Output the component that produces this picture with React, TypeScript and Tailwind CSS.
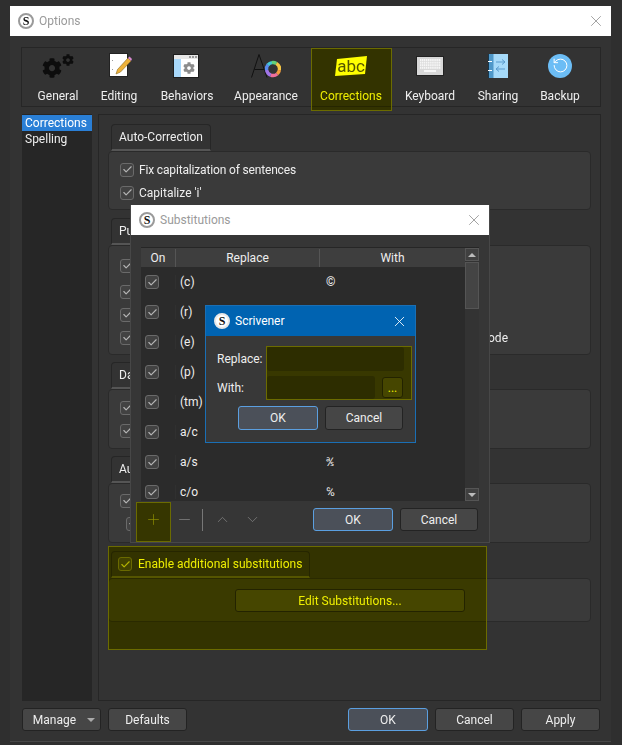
import { ReactNode } from "react";
import { Check, ChevronDown, ChevronUp, Minus, Plus, RotateCcw, X } from "lucide-react";
import { FaCog } from "react-icons/fa";

const toolbar = [
  { label: "General", width: "w-[72px]", icon: <GearsIcon /> },
  { label: "Editing", width: "w-[50px]", icon: <EditingIcon /> },
  { label: "Behaviors", width: "w-[86px]", icon: <BehaviorsIcon /> },
  { label: "Appearance", width: "w-[72px]", icon: <AppearanceIcon /> },
  { label: "Corrections", width: "w-[98px]", icon: <AbcIcon /> },
  { label: "Keyboard", width: "w-[60px]", icon: <KeyboardIcon /> },
  { label: "Sharing", width: "w-[76px]", icon: <SharingIcon /> },
  { label: "Backup", width: "w-[48px]", icon: <BackupIcon /> },
];

// the With values of the middle rows sit behind the Scrivener dialog
const substitutions = [
  ["(c)", "©"],
  ["(r)", ""],
  ["(e)", ""],
  ["(p)", ""],
  ["(tm)", ""],
  ["a/c", ""],
  ["a/s", "℁"],
  ["c/o", "℅"],
];

function GearsIcon() {
  return (
    <div className="flex items-start text-[#0d0d0d]">
      <FaCog size={20} className="mt-[4px]" />
      <FaCog size={12} />
    </div>
  );
}

function EditingIcon() {
  return (
    <svg width="26" height="25" viewBox="0 0 26 25">
      <rect x="3.5" y="0.5" width="18" height="23" fill="#fff" stroke="#222" />
      <rect x="6" y="7" width="1" height="1" fill="#999" />
      <rect x="6" y="16" width="1" height="1" fill="#999" />
      <path d="M10 21 L11.5 16.5 L22 5 L25 8 L14.5 19 Z" fill="#eeb23a" stroke="#8a6a20" strokeWidth="0.6" />
      <path d="M22 5 L23.5 3.5 L26 6 L25 8 Z" fill="#d88ad0" />
    </svg>
  );
}

function BehaviorsIcon() {
  return (
    <div className="relative ml-[-3px] h-[24px] w-[26px] border border-[#1d1d1d] bg-white">
      <div className="flex h-[4px] justify-end gap-[1px] bg-[#e6e6e6] pr-[1px] pt-[1px]">
        <span className="h-[2px] w-[2px] bg-[#999]" />
        <span className="h-[2px] w-[2px] bg-[#999]" />
        <span className="h-[2px] w-[2px] bg-[#999]" />
      </div>
      <div className="flex h-[18px]">
        <div className="w-[7px] bg-[#a8d8fa]" />
        <div className="flex flex-1 items-center justify-center text-[#8c8c8c]">
          <FaCog size={12} />
        </div>
      </div>
    </div>
  );
}

function arc(start: number, end: number) {
  const r = 6.5;
  const cx = 22;
  const cy = 15;
  const a = (start * Math.PI) / 180;
  const b = (end * Math.PI) / 180;
  return `M${cx + r * Math.cos(a)} ${cy + r * Math.sin(a)} A${r} ${r} 0 0 1 ${cx + r * Math.cos(b)} ${cy + r * Math.sin(b)}`;
}

function AppearanceIcon() {
  const segments = [
    ["#f6c644", -60, 10],
    ["#f39a3c", 10, 50],
    ["#ef6f9a", 50, 110],
    ["#a074e6", 110, 170],
    ["#5a8cf0", 170, 220],
    ["#42c8d8", 220, 260],
    ["#62d07a", 260, 300],
  ] as const;
  return (
    <svg width="30" height="24" viewBox="0 0 30 24" fill="none">
      <path d="M0.5 23.5 L8 0.5 L16 23.5 M3.5 15.5 L13 15.5" stroke="#111" strokeWidth="1" />
      {segments.map(([color, start, end]) => (
        <path key={color} d={arc(start, end + 1)} stroke={color} strokeWidth="3.4" />
      ))}
    </svg>
  );
}

function AbcIcon() {
  return (
    <svg width="32" height="20" viewBox="0 0 32 20">
      <polygon points="2,3 32,0 30,18 0,20" fill="#fff" />
      <text x="16" y="15.5" textAnchor="middle" fontSize="17" fontFamily="'Roboto', sans-serif" fill="#555">
        abc
      </text>
    </svg>
  );
}

function KeyboardIcon() {
  const keys = [];
  for (let row = 0; row < 4; row++) {
    for (let col = 0; col < 11; col++) {
      keys.push(<rect key={`${row}-${col}`} x={4 + col * 1.9} y={3 + row * 2.6} width="1.4" height="2" fill="#f6f6f6" />);
    }
  }
  return (
    <svg width="28" height="20" viewBox="0 0 28 20">
      <rect x="0.5" y="0.5" width="27" height="19" fill="#d8d8d8" stroke="#222" />
      {keys}
      <rect x="8" y="14" width="12" height="2" fill="#f6f6f6" />
    </svg>
  );
}

function SharingIcon() {
  return (
    <svg width="20" height="24" viewBox="0 0 20 24" fill="none">
      <rect x="0" y="0" width="20" height="24" fill="#a6daf9" />
      <rect x="0" y="0" width="5.5" height="24" fill="#4f98c9" />
      <rect x="0" y="0" width="1" height="24" fill="#17374d" />
      <rect x="0" y="7" width="4" height="1" fill="#fff" />
      <rect x="0" y="16" width="4" height="1" fill="#fff" />
      <path d="M8 8 H17 M14 5.5 L17 8 L14 10.5 M17 15 H8 M11 12.5 L8 15 L11 17.5" stroke="#5a9bcd" />
    </svg>
  );
}

function BackupIcon() {
  return (
    <div className="flex h-[24px] w-[24px] items-center justify-center rounded-full bg-[#6cbdf5]">
      <RotateCcw size={17} strokeWidth={1.4} className="text-white" />
    </div>
  );
}

function Logo({ ring = "border-[#9a9a9a]" }: { ring?: string }) {
  return (
    <div className={`flex h-[16px] w-[16px] items-center justify-center rounded-full border-2 bg-white font-['Liberation_Serif',serif] text-[12px] font-bold leading-none text-[#111] ${ring}`}>
      S
    </div>
  );
}

function Box({ className = "" }: { className?: string }) {
  return (
    <span className={`flex h-[14px] w-[14px] shrink-0 items-center justify-center rounded-[3px] border border-[#6a6a6a] bg-[#424242] ${className}`}>
      <Check size={11} strokeWidth={2.5} className="text-[#b4b4b4]" />
    </span>
  );
}

function Btn({ children, primary = false, className = "" }: { children: ReactNode; primary?: boolean; className?: string }) {
  const look = primary ? "border-[#5b9fe0] bg-[#4b5059]" : "border-[#232323] bg-[#464646]";
  return (
    <div className={`flex items-center justify-center rounded-[3px] border text-[12px] text-[#eee] ${look} ${className}`}>
      {children}
    </div>
  );
}

function Option({ label, className = "" }: { label: ReactNode; className?: string }) {
  return (
    <div className={`flex h-[23px] items-center gap-[5px] ${className}`}>
      <Box />
      {label}
    </div>
  );
}

function Group({ tab, className = "", boxClass, children }: { tab: ReactNode; className?: string; boxClass: string; children?: ReactNode }) {
  return (
    <div className={className}>
      <div className="ml-[3px] flex h-[27px] w-fit items-center gap-[6px] rounded-t-[4px] border border-b-[2px] border-[#262626] border-b-[#555] bg-[#333] px-[7px]">
        {tab}
      </div>
      <div className={`rounded-[4px] border border-[#2a2a2a] bg-[#3a3a3a] ${boxClass}`}>{children}</div>
    </div>
  );
}

function Highlight({ className }: { className: string }) {
  return (
    <div className={`absolute border border-[#6b6b00] ${className}`}>
      <div className="h-full w-full bg-[#ffff00] mix-blend-multiply" />
    </div>
  );
}

function TitleBar({ title }: { title: string }) {
  return (
    <div className="flex h-[30px] items-center justify-between bg-white pl-[8px] pr-[6px] text-[12px] text-[#9a9a9a]">
      <div className="flex items-center gap-[5px]">
        <Logo />
        {title}
      </div>
      <X size={18} strokeWidth={0.9} className="text-[#777]" />
    </div>
  );
}

function SubstitutionsDialog() {
  return (
    <div className="absolute left-[130px] top-[205px] h-[338px] w-[360px] border border-t-0 border-[#474747] bg-[#363636]">
      <TitleBar title="Substitutions" />
      <div className="mx-[10px] mt-[12px] flex h-[254px] border-t border-[#262626]">
        <div className="w-[324px] overflow-hidden bg-[#2b2b2b]">
          <div className="flex h-[19px] items-center bg-[#3e3e3e] text-[12px] text-[#eee]">
            <div className="w-[35px] border-r border-[#555] text-center">On</div>
            <div className="w-[144px] border-r border-[#555] text-center">Replace</div>
            <div className="flex-1 text-center">With</div>
          </div>
          {substitutions.map(([from, to]) => (
            <div key={from} className="flex h-[30px] items-center text-[12px] text-[#eee]">
              <div className="flex w-[35px] justify-start border-r border-[#303030] pl-[4px]">
                <Box />
              </div>
              <div className="w-[144px] pl-[4px]">{from}</div>
              <div className="pl-[6px]">{to}</div>
            </div>
          ))}
        </div>
        <div className="flex w-[14px] flex-col gap-[1px] bg-[#333]">
          <div className="flex h-[13px] items-center justify-center border border-[#555] bg-[#404040]">
            <span className="border-x-[4px] border-b-[4px] border-x-transparent border-b-[#bbb]" />
          </div>
          <div className="h-[47px] border border-[#555] bg-[#444]" />
          <div className="flex-1" />
          <div className="flex h-[13px] items-center justify-center border border-[#555] bg-[#404040]">
            <span className="border-x-[4px] border-t-[4px] border-x-transparent border-t-[#bbb]" />
          </div>
        </div>
      </div>
      <div className="flex h-[37px] items-center pl-[14px] pr-[11px]">
        <Plus size={17} strokeWidth={1} className="text-[#8e8e8e]" />
        <Minus size={17} strokeWidth={1} className="ml-[14px] text-[#888]" />
        <div className="ml-[9px] h-[22px] w-[1px] bg-[#777]" />
        <ChevronUp size={17} strokeWidth={1} className="ml-[11px] text-[#888]" />
        <ChevronDown size={17} strokeWidth={1} className="ml-[13px] text-[#888]" />
        <Btn primary className="ml-auto h-[23px] w-[80px]">OK</Btn>
        <Btn className="ml-[7px] h-[23px] w-[78px]">Cancel</Btn>
      </div>
    </div>
  );
}

function ScrivenerDialog() {
  return (
    <div className="absolute left-[205px] top-[305px] h-[138px] w-[211px] border border-[#1a6fb5] bg-[#383838]">
      <div className="flex h-[30px] items-center justify-between bg-[#0063b1] pl-[8px] pr-[7px] text-[12px] text-white">
        <div className="flex items-center gap-[5px]">
          <Logo ring="border-[#e8e8e8]" />
          Scrivener
        </div>
        <X size={17} strokeWidth={1.2} />
      </div>
      <div className="flex h-[34px] items-center pl-[11px] pt-[11px] text-[12px] text-[#eee]">
        <div className="w-[50px]">Replace:</div>
        <div className="h-[24px] w-[137px] rounded-[3px] bg-[#2d2d2d]" />
      </div>
      <div className="mt-[6px] flex items-center pl-[11px] text-[12px] text-[#eee]">
        <div className="w-[50px]">With:</div>
        <div className="h-[23px] w-[108px] rounded-[3px] bg-[#2d2d2d]" />
        <Btn className="ml-[7px] h-[21px] w-[21px]">...</Btn>
      </div>
      <div className="ml-[32px] mt-[7px] flex gap-[7px]">
        <Btn primary className="h-[24px] w-[80px]">OK</Btn>
        <Btn className="h-[24px] w-[78px]">Cancel</Btn>
      </div>
    </div>
  );
}

export default function App() {
  return (
    <div className="relative h-[745px] w-[622px] overflow-hidden bg-[#2f2f2f] pl-[10px] pt-[6px] font-['Roboto',sans-serif] text-[12px] text-[#eee]">
      <div className="h-[736px] w-[601px] border-b border-[#474747] bg-[#333]">
        <TitleBar title="Options" />
        <div className="ml-[11px] mt-[11px] flex h-[60px] w-[580px] border border-[#262626]">
          {toolbar.map((item) => (
            <div key={item.label} className={`flex shrink-0 flex-col items-center whitespace-nowrap ${item.width}`}>
              <div className="flex h-[40px] items-center justify-center pb-[5px]">{item.icon}</div>
              <div className="leading-[16px]">{item.label}</div>
            </div>
          ))}
        </div>
        <div className="ml-[12px] mt-[7px] flex h-[587px] gap-[6px]">
          <div className="w-[70px] bg-[#262626] pt-[1px] leading-[16px]">
            <div className="bg-[#2a7fd6] pl-[3px] text-white">Corrections</div>
            <div className="pl-[3px]">Spelling</div>
          </div>
          <div className="w-[503px] border border-[#262626] px-[9px] pt-[9px]">
            <Group tab="Auto-Correction" boxClass="h-[59px] pl-[11px] pt-[7px]">
              <Option label={<span className="tracking-[-0.16px]">Fix capitalization of sentences</span>} className="mt-[-1px]" />
              <Option label="Capitalize 'i'" />
            </Group>
            <Group tab="Pu" className="mt-[8px]" boxClass="h-[110px] pl-[11px] pt-[8px]">
              <Option label="" />
              <Option label="" className="mt-[3px]" />
              <Option label="" />
              <Option label={<span className="w-[369px] whitespace-nowrap text-right">ode</span>} />
            </Group>
            <Group tab="Da" className="mt-[7px]" boxClass="h-[60px] pl-[11px] pt-[6px]">
              <Option label="" />
              <Option label="" />
            </Group>
            <Group tab="Au" className="mt-[7px]" boxClass="h-[60px] pl-[11px] pt-[5px]">
              <Option label="" />
              <Option label="" className="ml-[6px]" />
            </Group>
            <Group
              tab={
                <>
                  <Box className="ml-[-1px]" />
                  Enable additional substitutions
                </>
              }
              className="mt-[8px]"
              boxClass="h-[44px] pl-[126px] pt-[10px]"
            >
              <Btn className="h-[23px] w-[230px]">Edit Substitutions...</Btn>
            </Group>
          </div>
        </div>
        <div className="ml-[12px] mt-[7px] flex h-[23px]">
          <Btn className="relative w-[79px] pr-[14px]">
            Manage
            <span className="absolute right-[5px] top-[9px] border-x-[4px] border-t-[4px] border-x-transparent border-t-[#aaa]" />
          </Btn>
          <Btn className="ml-[7px] w-[79px]">Defaults</Btn>
          <Btn primary className="ml-[161px] w-[80px]">OK</Btn>
          <Btn className="ml-[7px] w-[79px]">Cancel</Btn>
          <Btn className="ml-[7px] w-[79px]">Apply</Btn>
        </div>
      </div>

      <Highlight className="left-[311px] top-[48px] h-[63px] w-[81px]" />
      <Highlight className="left-[108px] top-[546px] h-[104px] w-[379px]" />
      <SubstitutionsDialog />
      <Highlight className="left-[136px] top-[502px] h-[40px] w-[35px]" />
      <ScrivenerDialog />
      <Highlight className="left-[266px] top-[346px] h-[54px] w-[146px]" />
    </div>
  );
}
